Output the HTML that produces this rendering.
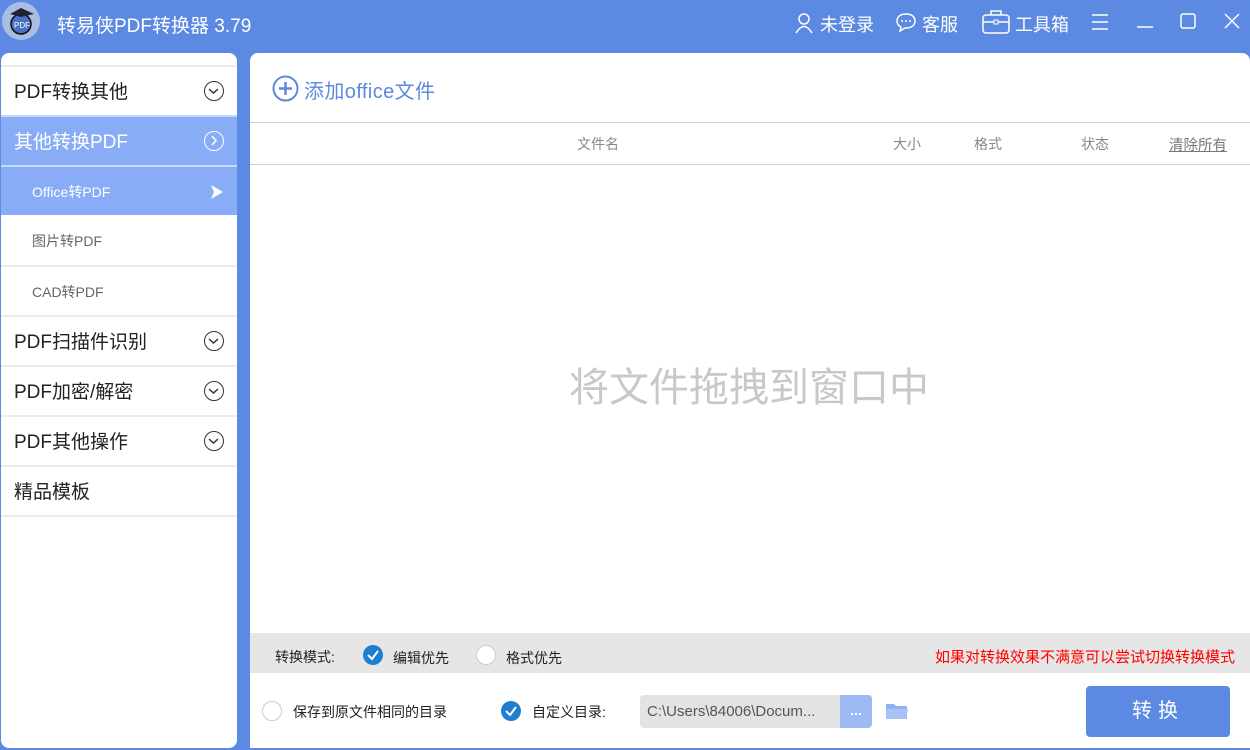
<!DOCTYPE html>
<html><head><meta charset="utf-8"><style>
*{margin:0;padding:0;box-sizing:border-box}
body{width:1250px;height:750px;background:#5c89e2;font-family:"Liberation Sans","Noto Sans CJK SC",sans-serif;position:relative;overflow:hidden}
.abs{position:absolute}
.t{color:#fff}
#side{left:1px;top:53px;width:236px;height:695px;background:#fff;border-radius:8px;overflow:hidden}
.row{position:absolute;left:0;width:236px;height:50px;border-top:2px solid #ececec;font-size:19px;color:#222;padding-left:13px;line-height:51px}
.sub{font-size:14px;color:#666;padding-left:31px}
.ico{position:absolute;right:13px;top:14px;width:20px;height:20px;border:1.5px solid #333;border-radius:50%}
#main{left:250px;top:53px;width:1000px;height:695px;background:#fff;border-radius:8px 8px 0 0;overflow:hidden}
.hd{position:absolute;top:82px;font-size:14px;color:#888}
.radio{position:absolute;width:20px;height:20px;border-radius:50%;border:1px solid #ccc;background:#fff}
.chk{position:absolute;width:20px;height:20px;border-radius:50%;background:#1e7fd1}
</style></head><body>
<div class="abs" style="left:2px;top:2px;width:38px;height:38px;border-radius:50%;background:#a9bde3"><svg width="38" height="38"><circle cx="19" cy="22" r="10" fill="#4a6fc4" stroke="#111" stroke-width="1.5"/><path d="M8 12 L19 6 L32 12 L19 15Z" fill="#223"/><text x="12" y="26" font-size="8" fill="#fff" font-family="Liberation Sans">PDF</text></svg></div>
<div class="abs t" style="left:57px;top:11px;font-size:19px">转易侠PDF转换器 3.79</div>
<svg class="abs" style="left:795px;top:12px" width="20" height="22"><circle cx="9" cy="7" r="5" fill="none" stroke="#fff" stroke-width="1.5"/><path d="M1 21 Q9 8 17 21" fill="none" stroke="#fff" stroke-width="1.5"/></svg>
<div class="abs t" style="left:820px;top:11px;font-size:18px">未登录</div>
<svg class="abs" style="left:895px;top:12px" width="22" height="20"><path d="M11 2 C4 2 2 6 2 9 C2 12 4 14 6 15 L5 19 L10 16 C17 16 20 13 20 9 C20 5 17 2 11 2Z" fill="none" stroke="#fff" stroke-width="1.5"/><circle cx="7" cy="9" r="1" fill="#fff"/><circle cx="11" cy="9" r="1" fill="#fff"/><circle cx="15" cy="9" r="1" fill="#fff"/></svg>
<div class="abs t" style="left:922px;top:11px;font-size:18px">客服</div>
<svg class="abs" style="left:982px;top:9px" width="28" height="25"><rect x="1" y="6" width="26" height="18" rx="3" fill="none" stroke="#fff" stroke-width="1.5"/><path d="M9 6 V2 H19 V6 M1 13 H27" fill="none" stroke="#fff" stroke-width="1.5"/><rect x="12" y="11" width="4" height="4" fill="#5c89e2" stroke="#fff"/></svg>
<div class="abs t" style="left:1015px;top:11px;font-size:18px">工具箱</div>
<svg class="abs" style="left:1090px;top:13px" width="20" height="18"><path d="M2 2H18M2 9H18M2 16H18" stroke="#fff" stroke-width="1.5"/></svg>
<svg class="abs" style="left:1135px;top:13px" width="20" height="18"><path d="M2 14H18" stroke="#fff" stroke-width="1.5"/></svg>
<svg class="abs" style="left:1179px;top:12px" width="18" height="18"><rect x="2" y="2" width="14" height="14" rx="2" fill="none" stroke="#fff" stroke-width="1.5"/></svg>
<svg class="abs" style="left:1223px;top:12px" width="18" height="18"><path d="M2 2L16 16M16 2L2 16" stroke="#fff" stroke-width="1.5"/></svg>

<div id="side" class="abs">
<div class="row" style="top:12px">PDF转换其他<span class="ico"><svg width="17" height="17" style="position:absolute;left:0;top:0"><path d="M4 7L8.5 11L13 7" fill="none" stroke="#333" stroke-width="1.5"/></svg></span></div>
<div class="row" style="top:62px;background:#88acf6;color:#fff;border-top-color:#c8d8fb">其他转换PDF<span class="ico" style="border-color:#fff"><svg width="17" height="17" style="position:absolute;left:0;top:0"><path d="M7 4L11 8.5L7 13" fill="none" stroke="#fff" stroke-width="1.5"/></svg></span></div>
<div class="row sub" style="top:112px;background:#88acf6;color:#fff;border-top-color:#c8d8fb">Office转PDF<svg width="14" height="16" style="position:absolute;right:13px;top:17px"><path d="M1 1L13 8L1 15L4 8Z" fill="#fff"/></svg></div>
<div class="row sub" style="top:162px;border-top:none;line-height:53px">图片转PDF</div>
<div class="row sub" style="top:212px">CAD转PDF</div>
<div class="row" style="top:262px">PDF扫描件识别<span class="ico"><svg width="17" height="17" style="position:absolute;left:0;top:0"><path d="M4 7L8.5 11L13 7" fill="none" stroke="#333" stroke-width="1.5"/></svg></span></div>
<div class="row" style="top:312px">PDF加密/解密<span class="ico"><svg width="17" height="17" style="position:absolute;left:0;top:0"><path d="M4 7L8.5 11L13 7" fill="none" stroke="#333" stroke-width="1.5"/></svg></span></div>
<div class="row" style="top:362px">PDF其他操作<span class="ico"><svg width="17" height="17" style="position:absolute;left:0;top:0"><path d="M4 7L8.5 11L13 7" fill="none" stroke="#333" stroke-width="1.5"/></svg></span></div>
<div class="row" style="top:412px">精品模板</div>
<div class="row" style="top:462px;height:2px"></div>
</div>

<div id="main" class="abs">
<svg class="abs" style="left:22px;top:22px" width="27" height="27"><circle cx="13.5" cy="13.5" r="12" fill="none" stroke="#5c89e2" stroke-width="2"/><path d="M13.5 7V20M7 13.5H20" stroke="#5c89e2" stroke-width="2.5"/></svg>
<div class="abs" style="left:54px;top:22px;font-size:20px;color:#5c89e2;letter-spacing:0.4px">添加office文件</div>
<div class="abs" style="left:0;top:69px;width:1000px;height:1px;background:#c5cfe0"></div>
<div class="abs" style="left:0;top:111px;width:1000px;height:1px;background:#c5cfe0"></div>
<div class="hd" style="left:327px;top:81px">文件名</div>
<div class="hd" style="left:643px;top:81px">大小</div>
<div class="hd" style="left:724px;top:81px">格式</div>
<div class="hd" style="left:831px;top:81px">状态</div>
<div class="hd" style="left:919px;top:81px;color:#777;text-decoration:underline;font-size:14.5px">清除所有</div>
<div class="abs" style="left:319px;top:302px;font-size:40px;color:#c8c8c8">将文件拖拽到窗口中</div>
<div class="abs" style="left:0;top:580px;width:1000px;height:40px;background:#e6e6e6"></div>
<div class="abs" style="left:25px;top:594px;font-size:14px;color:#222">转换模式:</div>
<div class="chk" style="left:113px;top:592px"><svg width="20" height="20"><path d="M5 10L9 14L15 6" fill="none" stroke="#fff" stroke-width="2"/></svg></div>
<div class="abs" style="left:143px;top:595px;font-size:14px;color:#222">编辑优先</div>
<div class="radio" style="left:226px;top:592px"></div>
<div class="abs" style="left:256px;top:595px;font-size:14px;color:#222">格式优先</div>
<div class="abs" style="left:685px;top:593px;font-size:15px;color:#f00">如果对转换效果不满意可以尝试切换转换模式</div>
<div class="radio" style="left:12px;top:648px"></div>
<div class="abs" style="left:43px;top:649px;font-size:14px;color:#222">保存到原文件相同的目录</div>
<div class="chk" style="left:251px;top:648px"><svg width="20" height="20"><path d="M5 10L9 14L15 6" fill="none" stroke="#fff" stroke-width="2"/></svg></div>
<div class="abs" style="left:282px;top:649px;font-size:14px;color:#222">自定义目录:</div>
<div class="abs" style="left:390px;top:642px;width:232px;height:33px;background:#e3e3e3;border-radius:4px;font-size:15px;color:#555;padding:8px 0 0 7px">C:\Users\84006\Docum...</div>
<div class="abs" style="left:590px;top:642px;width:32px;height:33px;background:#9dbaf7;border-radius:0 4px 4px 0;color:#fff;text-align:center;font-size:14px;line-height:30px;font-weight:bold">...</div>
<svg class="abs" style="left:635px;top:648px" width="24" height="20"><path d="M1 3H9L11 5H22V18H1Z" fill="#8fb0f5"/><path d="M1 8H23L21 18H1Z" fill="#a8c2f8"/></svg>
<div class="abs" style="left:836px;top:633px;width:144px;height:51px;background:#5c89e2;border-radius:4px;color:#fff;font-size:20px;text-align:center;line-height:51px;letter-spacing:6px">转换</div>
</div>
</body></html>
